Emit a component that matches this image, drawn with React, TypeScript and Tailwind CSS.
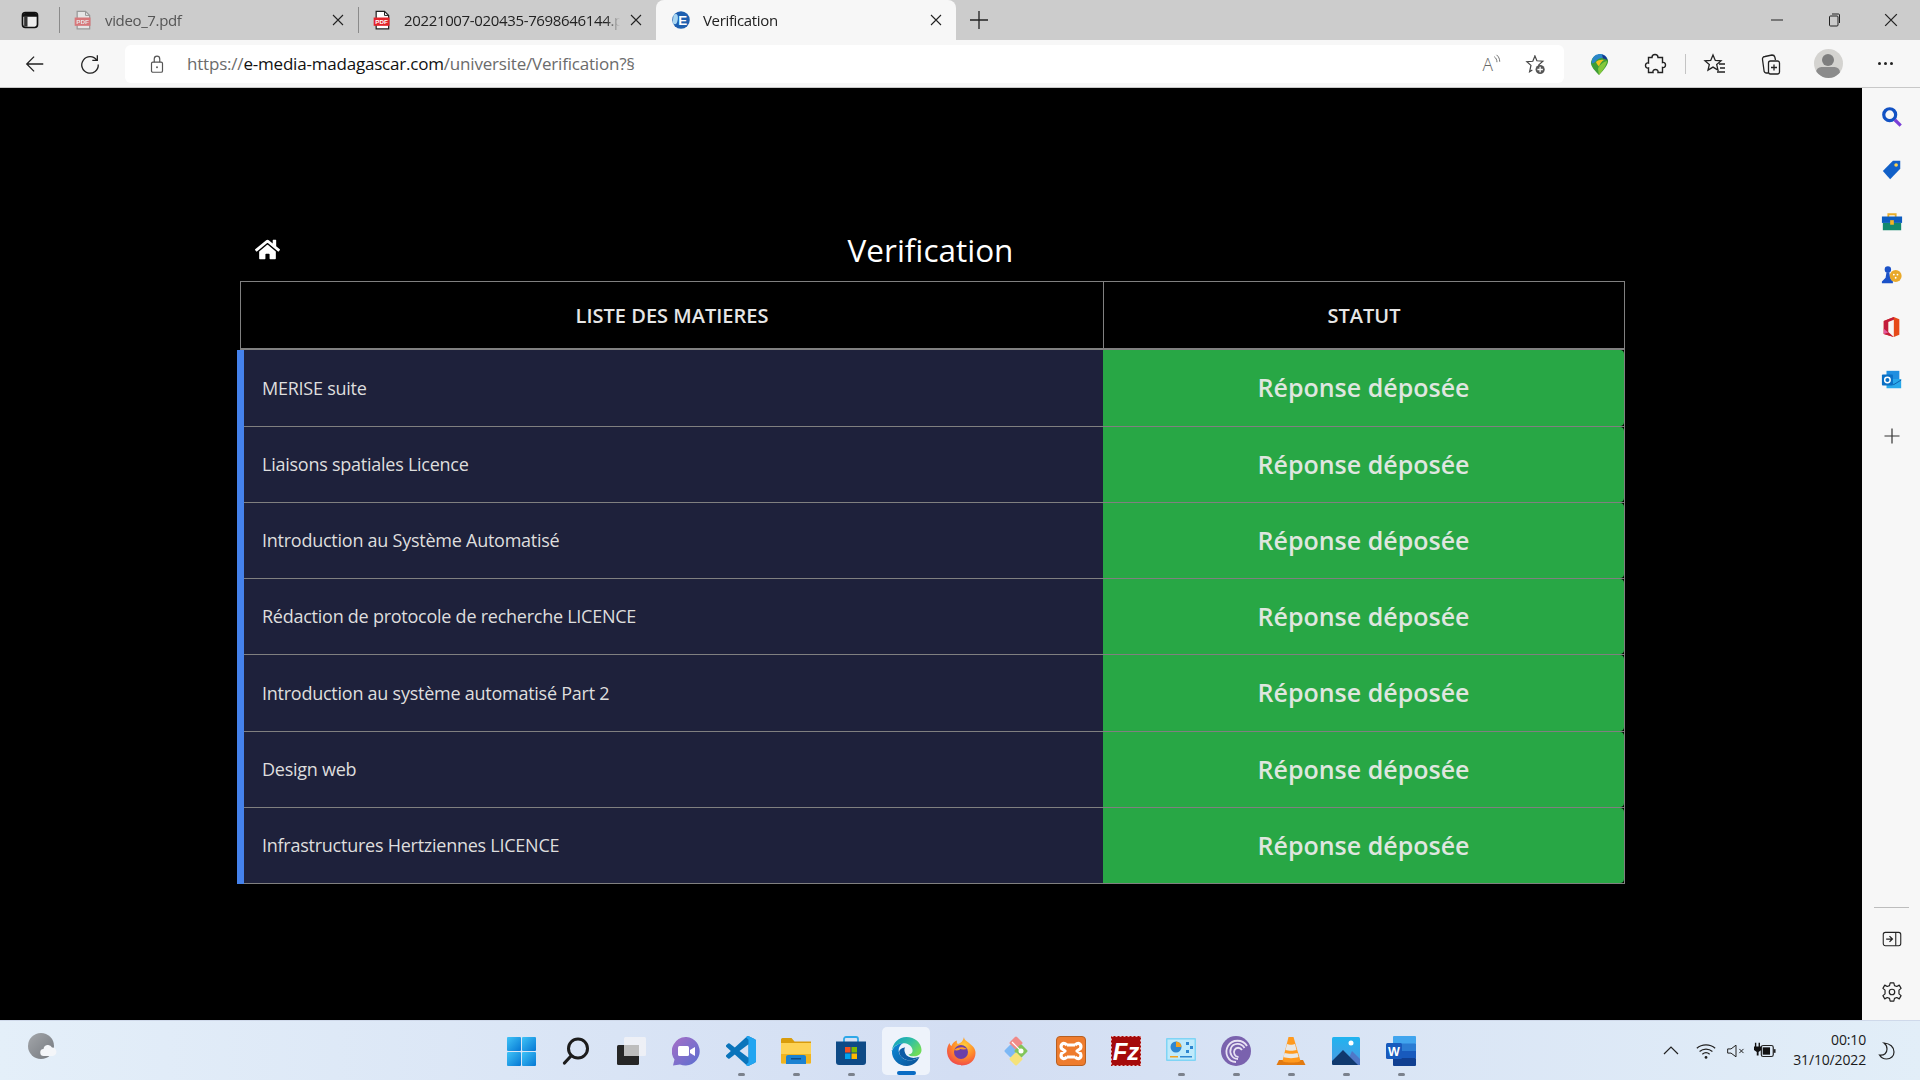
import React from "react";
import { FaHome } from "react-icons/fa";

const matieres = [
  "MERISE suite",
  "Liaisons spatiales Licence",
  "Introduction au Système Automatisé",
  "Rédaction de protocole de recherche LICENCE",
  "Introduction au système automatisé Part 2",
  "Design web",
  "Infrastructures Hertziennes LICENCE",
];

const rowH = ["h-[77px]", "h-[76px]", "h-[76px]", "h-[76px]", "h-[77px]", "h-[76px]", "h-[76px]"];

const S = ({ size = 20, vb = 24, children, className = "" }: { size?: number; vb?: number; children: React.ReactNode; className?: string }) => (
  <svg width={size} height={size} viewBox={`0 0 ${vb} ${vb}`} fill="none" className={`block shrink-0 ${className}`}>
    {children}
  </svg>
);

const Pdf = ({ faded }: { faded?: boolean }) => (
  <S size={20} className={faded ? "opacity-50" : ""}>
    <path d="M5 1.500h10l5 5v16H5z" fill="#fff" stroke={faded ? "#666" : "#222"} strokeWidth="1.500" />
    <path d="M15 1.500v5h5" stroke={faded ? "#666" : "#222"} strokeWidth="1.200" />
    <rect x="2" y="9" width="19" height="10" fill="#e3242b" />
    <text x="11.500" y="17" fontSize="7.500" fontWeight="700" textAnchor="middle" fill="#fff" fontFamily="Liberation Sans, sans-serif">PDF</text>
  </S>
);

const Favicon = () => (
  <S size={20}>
    <circle cx="12" cy="12" r="10.500" fill="#1e5fb0" />
    <path d="M3 6c4-3 6 0 5 6s-3 6-6 4" fill="#a8d6f2" />
    <text x="14" y="18" fontSize="16" fontWeight="700" textAnchor="middle" fill="#fff" fontFamily="Liberation Sans, sans-serif">E</text>
  </S>
);

const XIcon = ({ size = 12 }: { size?: number }) => (
  <S size={size} vb={12}>
    <path d="M1 1l10 10M11 1L1 11" stroke="#222" strokeWidth="1.100" />
  </S>
);

const Tab = ({ width, icon, text, textClass, active, sep }: { width: string; icon: React.ReactNode; text: string; textClass: string; active?: boolean; sep?: boolean }) => (
  <div className={`${width} h-10 flex items-center shrink-0 ${active ? "bg-[#f7f7f7] rounded-t-lg pl-[15px] pr-[14px]" : "pl-[13px] pr-[14px]"} ${sep ? "border-l border-[#8a8a8a] [border-image:linear-gradient(transparent_20%,#8a8a8a_20%,#8a8a8a_80%,transparent_80%)_1]" : ""}`}>
    {icon}
    <span className={`ml-[12px] flex-1 min-w-0 whitespace-nowrap overflow-hidden text-[15px] tracking-[-0.35px] [mask-image:linear-gradient(to_left,transparent,black_14px)] ${textClass}`}>{text}</span>
    <span className="ml-[10px]"><XIcon /></span>
  </div>
);

const TabStrip = () => (
  <div className="h-10 bg-[#cccccc] flex items-center shrink-0 font-['Open_Sans',sans-serif]">
    <div className="w-[59px] h-10 flex items-center justify-center shrink-0">
      <S size={20}>
        <rect x="3" y="3" width="18" height="18" rx="3.500" stroke="#111" strokeWidth="2" fill="#eee" />
        <path d="M3.500 6.500a3 3 0 0 1 3-3h11a3 3 0 0 1 3 3V8h-17z" fill="#111" />
        <rect x="5" y="7" width="4" height="13" fill="#333" />
      </S>
    </div>
    <Tab width="w-[299px]" sep icon={<Pdf faded />} text="video_7.pdf" textClass="text-[#555]" />
    <Tab width="w-[298px]" sep icon={<Pdf />} text="20221007-020435-7698646144.pdf" textClass="text-[#222]" />
    <Tab width="w-[300px]" active icon={<Favicon />} text="Verification" textClass="text-[#222]" />
    <div className="ml-[13px]">
      <S size={20} vb={20}><path d="M10 1v18M1 10h18" stroke="#222" strokeWidth="1.300" /></S>
    </div>
    <div className="ml-auto flex items-center">
      <div className="w-[57px] flex justify-center"><S size={12} vb={12}><path d="M0 6h12" stroke="#222" /></S></div>
      <div className="w-[57px] flex justify-center">
        <S size={14} vb={14}>
          <rect x="2.500" y="3" width="8.500" height="10" rx="1" stroke="#222" />
          <path d="M5 1h6.500a1 1 0 0 1 1 1v8" stroke="#222" />
        </S>
      </div>
      <div className="w-[58px] flex justify-center"><XIcon size={14} /></div>
    </div>
  </div>
);

const Toolbar = () => (
  <div className="h-[48px] bg-[#f7f7f7] flex items-center shrink-0 border-b border-[#c8c8c8] font-['Open_Sans',sans-serif]">
    <div className="w-[69px] flex justify-center">
      <S size={22}><path d="M21 12H3M11 4l-8 8 8 8" stroke="#222" strokeWidth="1.400" /></S>
    </div>
    <div className="w-[42px] flex justify-center">
      <S size={22}><path d="M19.500 8A9 9 0 1 0 21 12.500M20 2.500V8h-5.500" stroke="#222" strokeWidth="1.400" /></S>
    </div>
    <div className="ml-[14px] w-[1439px] h-[38px] bg-white rounded-md flex items-center shrink-0">
      <div className="w-[62px] pl-[1px] flex justify-center shrink-0">
        <S size={22}>
          <rect x="6" y="10" width="12" height="11" rx="1.500" stroke="#555" strokeWidth="1.300" />
          <path d="M9 10V6.500a3 3 0 0 1 6 0V10" stroke="#555" strokeWidth="1.300" />
          <circle cx="12" cy="15.500" r="1" fill="#555" />
        </S>
      </div>
      <span className="text-[17px] tracking-[-0.2px] whitespace-nowrap text-[#6b6b6b]">
        https://<span className="text-[#111]">e-media-madagascar.com</span>/universite/Verification?§
      </span>
      <div className="ml-auto flex items-center pr-[17px] gap-[23px]">
        <S size={22}>
          <text x="8.500" y="20" fontSize="19" fontWeight="300" textAnchor="middle" fill="#666" fontFamily="Open Sans, sans-serif">A</text>
          <path d="M15.500 4c2 1.500 3 3.500 3 6M18 2c2.500 2 3.500 4.500 3.500 7.500" stroke="#666" strokeWidth="1" />
        </S>
        <S size={22}>
          <path d="M10.500 2.500l2.500 6 6.500.5-4.500 4 .5 3M8 18.500l-3 2 1.500-7-4.500-4 6.500-.5 2.500-6" stroke="#444" strokeWidth="1.300" />
          <circle cx="16.500" cy="18" r="5" fill="#555" />
          <path d="M16.500 15v6M13.500 18h6" stroke="#fff" strokeWidth="1.400" />
        </S>
      </div>
    </div>
    <div className="w-[70px] flex justify-center">
      <S size={24}>
        <path d="M4 10a9 9 0 0 1 17-2c1 4-5 11-9 15C9 20 3 14 4 10z" fill="#3f9d36" />
        <path d="M8 3.500C12 .5 19 2 20.500 7c-3-2-8-2-11 1.500-1.500 2-3 3-5 3 0-3 1-6.500 3.500-8z" fill="#2a86c8" />
        <path d="M15 2.500c3 1 5 3 5.500 6-1-1-2.500-2-4.500-2z" fill="#16358f" />
        <path d="M9 10c2-2 5-2.500 8-2-2 1-4 3.500-5 6.500-1-1-2.500-3-3-4.500z" fill="#f3c11f" />
        <path d="M11 17c1-4 5-7 9-8-.5 4-4.500 10-8 14z" fill="#84c83c" />
      </S>
    </div>
    <div className="w-[42px] flex justify-center">
      <S size={24}>
        <path d="M9 5.500c0-4 6-4 6 0h4.500v5c4-1 4 6 0 5v5h-4.500c1-4-6-4-5 0H5.500v-4.500c-4 1-4-6 0-5V5.500z" stroke="#222" strokeWidth="1.400" fill="none" />
      </S>
    </div>
    <div className="h-[20px] w-px bg-[#c4c4c4] ml-[9px]" />
    <div className="w-[58px] flex justify-center">
      <S size={24}>
        <path d="M10 3l2.300 5.500 5.700.4-4.300 3.700 1.300 5.500-5-3-5 3 1.300-5.500L2 8.900l5.700-.4z" stroke="#222" strokeWidth="1.300" />
        <path d="M16 12h6M17 16h5M14 20h8" stroke="#222" strokeWidth="1.300" />
      </S>
    </div>
    <div className="w-[54px] flex justify-center">
      <S size={24}>
        <path d="M9 21H7.500A2.500 2.500 0 0 1 5 18.500l-1.500-11A2.500 2.500 0 0 1 6 4.500l7-1.500c1.500 0 2.500.8 2.800 2l.7 3" stroke="#222" strokeWidth="1.300" />
        <rect x="9.500" y="9" width="11" height="13" rx="2" stroke="#222" strokeWidth="1.300" fill="#f7f7f7" />
        <path d="M15 12.500v6M12 15.500h6" stroke="#222" strokeWidth="1.300" />
      </S>
    </div>
    <div className="w-[60px] flex justify-center">
      <div className="w-[29px] h-[29px] rounded-full bg-[#d4d3d0] overflow-hidden flex flex-col items-center pt-[5px]">
        <div className="w-[12px] h-[14px] rounded-full bg-[#7e7e7e]" />
        <div className="w-[24px] h-[14px] rounded-full bg-[#8b8b8b] mt-[1px]" />
      </div>
    </div>
    <div className="w-[54px] flex justify-center gap-[3px]">
      <span className="w-[3px] h-[3px] rounded-full bg-[#222]" />
      <span className="w-[3px] h-[3px] rounded-full bg-[#222]" />
      <span className="w-[3px] h-[3px] rounded-full bg-[#222]" />
    </div>
  </div>
);

const Content = () => (
  <main className="flex-1 bg-black flex justify-center pt-[139px] pl-[3px] font-['Open_Sans',sans-serif] min-w-0">
    <div className="w-[1385px]">
      <div className="h-[54px] grid grid-cols-[1fr_auto_1fr] items-center pb-[9px]">
        <FaHome className="text-white w-[25px] h-[25px] ml-[15px]" />
        <h1 className="text-[31.500px] text-white mr-[4px] leading-none">Verification</h1>
        <span />
      </div>
      <div className="flex h-[69px] border border-[#808080] border-b-2">
        <div className="w-[862px] shrink-0 flex items-center justify-center pt-[1px] text-[20px] font-semibold text-[#e6e6e6]">LISTE DES MATIERES</div>
        <div className="flex-1 border-l border-[#808080] flex items-center justify-center pt-[1px] text-[20px] font-semibold text-[#e6e6e6]">STATUT</div>
      </div>
      {matieres.map((m, i) => (
        <div key={m} className={`${rowH[i]} flex -ml-[3px]`}>
          <div className="w-[866px] shrink-0 bg-[#1e213b] border-l-[7px] border-[#4582ec]">
            <div className="h-full w-full flex items-center pl-[18px] border-b border-[#808080] text-[18px] tracking-[-0.25px] text-[#dedede]">{m}</div>
          </div>
          <div className="flex-1 bg-black min-w-0 border-b border-r border-[#808080]">
            <div className="h-full bg-[#28a745] rounded-r-[4px] flex items-center justify-center text-[25px] font-semibold text-[#dfe6df]">Réponse déposée</div>
          </div>
        </div>
      ))}
    </div>
  </main>
);

const Sidebar = () => (
  <aside className="w-[58px] bg-[#f7f7f7] flex flex-col items-center shrink-0">
    <div className="flex flex-col items-center gap-[30.500px] pt-[18px] pl-[1px]">
      <S size={22}>
        <circle cx="9.500" cy="9.500" r="6.500" stroke="#1252c4" strokeWidth="3.500" />
        <path d="M15 15l6.500 6.500" stroke="#7a3fd6" strokeWidth="3.500" />
      </S>
      <S size={22}>
        <path d="M2 13L13 2h8v8.500L10 22z" fill="#1160c8" />
        <circle cx="16.500" cy="6.500" r="2" fill="#ffd24a" />
      </S>
      <S size={22}>
        <path d="M8 7V3.500h8V7" stroke="#e9ad2a" strokeWidth="2" />
        <rect x="1" y="6" width="22" height="7" fill="#0d5cc0" />
        <rect x="2" y="13" width="20" height="8" fill="#13896d" />
        <rect x="10" y="10" width="4" height="5" fill="#f5b423" />
      </S>
      <S size={22}>
        <circle cx="7.500" cy="6" r="3.500" fill="#1b52c8" />
        <path d="M6 9h3l1 6 3 4v2H1v-2l4-4z" fill="#1b52c8" />
        <circle cx="16" cy="13" r="6.500" fill="#e9a92a" />
        <circle cx="14" cy="11.500" r="1" fill="#fff" /><circle cx="18" cy="11.500" r="1" fill="#fff" /><circle cx="16" cy="15" r="1" fill="#fff" />
      </S>
      <S size={22}>
        <path d="M14 1l6 2.500v17L14 23 3 19.500V5.500z" fill="#e64a19" />
        <path d="M3 5.500L14 1v3L8 6.500v11l6 5.500L3 19.500z" fill="#c31c3b" />
        <path d="M8 6.500l6-2.500v19l-6-5.500z" fill="#f7f7f7" />
        <path d="M3 14v5.500L8 18z" fill="#e45a9f" />
      </S>
      <S size={22}>
        <rect x="6" y="2" width="14" height="10" fill="#1f8ee0" />
        <path d="M6 11h16v10H6z" fill="#28a8ea" />
        <path d="M6 12l8 5 8-5" stroke="#0a5aa8" strokeWidth="1" />
        <rect x="1" y="6" width="12" height="12" rx="1" fill="#0a6fc4" />
        <circle cx="7" cy="12" r="3" stroke="#fff" strokeWidth="1.600" />
      </S>
      <S size={16} vb={16} className="mt-[7px]"><path d="M8 .5v15M.5 8h15" stroke="#333" strokeWidth="1.200" /></S>
    </div>
    <div className="mt-auto w-full flex flex-col items-center pb-[17px] pl-[1px]">
      <div className="w-[35px] h-px bg-[#bdbdbd] mb-0" />
      <div className="mt-[21px]">
        <S size={20}>
          <rect x="1.500" y="4" width="21" height="16" rx="2.500" stroke="#222" strokeWidth="1.300" />
          <path d="M16.500 4v16" stroke="#222" strokeWidth="1.300" />
          <path d="M5 12h7M9 8.500l3.500 3.500L9 15.500" stroke="#222" strokeWidth="1.500" />
        </S>
      </div>
      <div className="mt-[32px]">
        <S size={22}>
          <path d="M10 2h4l.7 3 2.500 1 2.700-1.500 2 3.500L19.600 10v4l2.300 2-2 3.500-2.700-1.500-2.500 1L14 22h-4l-.7-3-2.500-1L4.100 19.500l-2-3.500L4.400 14v-4L2.100 8l2-3.500L6.800 6l2.500-1z" stroke="#222" strokeWidth="1.300" strokeLinejoin="round" />
          <circle cx="12" cy="12" r="3" stroke="#222" strokeWidth="1.300" />
        </S>
      </div>
    </div>
  </aside>
);

const Start = () => (
  <S size={29} vb={29}>
    <defs>
      <linearGradient id="st" x1="0" y1="0" x2="1" y2="1"><stop offset="0" stopColor="#3fc3f7" /><stop offset="1" stopColor="#0678d4" /></linearGradient>
    </defs>
    <rect x="0" y="0" width="14" height="14" rx="1" fill="url(#st)" />
    <rect x="15" y="0" width="14" height="14" rx="1" fill="url(#st)" />
    <rect x="0" y="15" width="14" height="14" rx="1" fill="url(#st)" />
    <rect x="15" y="15" width="14" height="14" rx="1" fill="url(#st)" />
  </S>
);

const Search = () => (
  <S size={28} vb={28}>
    <circle cx="16" cy="11.500" r="9.500" stroke="#1c1c1c" strokeWidth="3" />
    <path d="M9 19l-6.500 7" stroke="#1c1c1c" strokeWidth="3.200" strokeLinecap="round" />
  </S>
);

const TaskView = () => (
  <S size={30} vb={30}>
    <rect x="1" y="9" width="22" height="20" rx="1.500" fill="#262626" />
    <rect x="8" y="1" width="22" height="19" rx="1.500" fill="#f2f3f6" fillOpacity="0.8" />
    <rect x="8" y="9" width="15" height="11" fill="#bdbdbd" />
  </S>
);

const Chat = () => (
  <S size={29} vb={29}>
    <defs>
      <linearGradient id="ch" x1="0" y1="0" x2="1" y2="1"><stop offset="0" stopColor="#a86fc6" /><stop offset="1" stopColor="#5a6fd0" /></linearGradient>
    </defs>
    <path d="M14.500 0A14.300 14.300 0 1 1 8 27.500L1 28.500l1.500-6A14.300 14.300 0 0 1 14.500 0z" fill="url(#ch)" />
    <rect x="6" y="9" width="11" height="10" rx="1.500" fill="#fff" />
    <path d="M18 13l5-3v9l-5-3z" fill="#fff" />
  </S>
);

const VSCode = () => (
  <S size={30}>
    <path d="M23.150 2.587L18.210.21a1.494 1.494 0 0 0-1.705.29l-9.460 8.630-4.120-3.128a.999.999 0 0 0-1.276.057L.327 7.261A1 1 0 0 0 .326 8.740L3.899 12 .326 15.260a1 1 0 0 0 .001 1.479L1.650 17.940a.999.999 0 0 0 1.276.057l4.120-3.128 9.460 8.630a1.492 1.492 0 0 0 1.704.29l4.942-2.377A1.500 1.500 0 0 0 24 20.060V3.939a1.500 1.500 0 0 0-.850-1.352zm-5.146 14.861L10.826 12l7.178-5.448v10.896z" fill="#0a74bb" />
    <path d="M23.150 2.587L18.210.21a1.494 1.494 0 0 0-1.705.29L16 1 18 3v18l-2 2 .5.500a1.492 1.492 0 0 0 1.704.29l4.942-2.377A1.500 1.500 0 0 0 24 20.060V3.939a1.500 1.500 0 0 0-.850-1.352z" fill="#22a5f1" />
  </S>
);

const Files = () => (
  <S size={30} vb={30}>
    <path d="M0 3.500A1.500 1.500 0 0 1 1.500 2h9l3 3.500H30V10H0z" fill="#d99c0c" />
    <path d="M0 7h30v19.500a1 1 0 0 1-1 1H1a1 1 0 0 1-1-1z" fill="#fdd255" />
    <path d="M0 18h30v8.500a1 1 0 0 1-1 1H1a1 1 0 0 1-1-1z" fill="#f0b420" />
    <path d="M5 28v-7a2 2 0 0 1 2-2h16a2 2 0 0 1 2 2v7z" fill="#1b82d2" />
    <rect x="10" y="22" width="10" height="1.500" fill="#0c4c8a" />
  </S>
);

const Store = () => (
  <S size={30} vb={30}>
    <path d="M8 6V3a2 2 0 0 1 2-2h10a2 2 0 0 1 2 2v3" stroke="#2ea8e8" strokeWidth="1.800" />
    <path d="M0 5.500h30V26a3 3 0 0 1-3 3H3a3 3 0 0 1-3-3z" fill="#0e4a86" />
    <rect x="9" y="11" width="5.500" height="5.500" fill="#f25022" />
    <rect x="15.500" y="11" width="5.500" height="5.500" fill="#7fba00" />
    <rect x="9" y="17.500" width="5.500" height="5.500" fill="#00a4ef" />
    <rect x="15.500" y="17.500" width="5.500" height="5.500" fill="#ffb900" />
  </S>
);

const Edge = () => (
  <S size={31} vb={32}>
    <defs>
      <linearGradient id="eg" x1="0" y1="0" x2="1" y2="0.6"><stop offset="0" stopColor="#0c9bc8" /><stop offset="0.6" stopColor="#35c1a0" /><stop offset="1" stopColor="#6fdc5a" /></linearGradient>
      <linearGradient id="eb" x1="0" y1="0" x2="1" y2="1"><stop offset="0" stopColor="#0d8ad8" /><stop offset="1" stopColor="#0a4f94" /></linearGradient>
    </defs>
    <path d="M1 15.500C1.500 7 8 1 16 1c8.500 0 15.500 6 15.500 13.500 0 4.500-4 6.500-8 6.500-2.500 0-5-.7-5.500-2 3 0 5-2 4-5.500-1-4-5.500-6-9-6-5.500 0-10.500 3-12.500 8z" fill="url(#eg)" />
    <path d="M1 15.500C3 10 8 7.500 12.500 7.500c-3 1.500-5 4.500-4.500 8.500.8 6 7 10 13.500 9 3-.4 6-1.500 8-3.500C27 27.500 22 31 16.500 31 7.500 31 .5 24 1 15.500z" fill="url(#eb)" />
    <path d="M8.500 17c.8 5 6 8.500 12.500 8 3-.3 6-1.500 8.500-3.500-3 1-6.500 1.500-9 .8-4-1-6-3.500-6.500-6.500-.3-1.500-.2-3 .6-4.300C11 12.500 8 14 8.500 17z" fill="#0b5aa6" />
  </S>
);

const Firefox = () => (
  <S size={30} vb={30}>
    <defs>
      <radialGradient id="ff" cx="0.6" cy="0.3" r="0.8"><stop offset="0" stopColor="#ffcf3b" /><stop offset="0.5" stopColor="#ff8a2a" /><stop offset="1" stopColor="#ec3a52" /></radialGradient>
    </defs>
    <path d="M15 29C6 29 1 22 1 15c0-3 1-6 2.500-8 .3 1.500 1 2.500 2 3 1-3 3-4.500 5.500-5.500-.5 2 0 3 1 3.500 3-1 5-3 6-7 0 3 3 4 5 6 3 2.500 6.500 5 6.500 10 0 8-6.500 12.500-14.500 12.500z" fill="url(#ff)" />
    <circle cx="15" cy="16" r="7" fill="#6c3fa8" />
    <path d="M8 14c3-3 9-4 13-1-2 .5-5 .5-7 0 0 1-3 2-6 1z" fill="#ff9a2e" />
  </S>
);

const Kraken = () => (
  <S size={32} vb={32}>
    <rect x="6" y="11" width="10" height="10" rx="1.500" transform="rotate(45 11 16)" fill="#7cb8f5" />
    <rect x="11" y="3" width="10" height="10" rx="1.500" transform="rotate(45 16 8)" fill="#f08a88" />
    <rect x="16" y="11" width="10" height="10" rx="1.500" transform="rotate(45 21 16)" fill="#82c45a" />
    <rect x="11" y="19" width="10" height="10" rx="1.500" transform="rotate(45 16 24)" fill="#f5e27a" />
    <circle cx="21" cy="16" r="2.500" fill="#fff" />
    <path d="M12 7l8 8" stroke="#fff" strokeWidth="1.200" />
  </S>
);

const Xampp = () => (
  <S size={30} vb={30}>
    <rect x="0.500" y="0.500" width="29" height="29" rx="3.500" fill="#ee7c2e" stroke="#b85f20" />
    <path d="M11 9C7 5.500 4 8.500 5.500 12.500L9 15l-3.500 2.500C4 21.500 7 24.500 11 21M19 9c4-3.500 7-.5 5.500 3.500L21 15l3.500 2.500C26 21.500 23 24.500 19 21M11 9h8M11 21h8" stroke="#fff" strokeWidth="3.200" strokeLinejoin="round" />
  </S>
);

const Filezilla = () => (
  <S size={30} vb={30}>
    <rect x="0" y="0" width="30" height="30" fill="#a50a0a" />
    <rect x="0.500" y="0.500" width="29" height="29" fill="none" stroke="#e8b0b0" strokeWidth="1" strokeDasharray="2 2" />
    <text x="15" y="24" fontSize="24" fontWeight="700" fontStyle="italic" textAnchor="middle" fill="#fff" fontFamily="Liberation Sans, sans-serif">Fz</text>
  </S>
);

const Panel = () => (
  <S size={30} vb={30}>
    <rect x="0" y="2" width="30" height="23" rx="1" fill="#7fd4f5" />
    <rect x="1.500" y="3.500" width="27" height="20" fill="#bfeafb" />
    <circle cx="10" cy="11" r="5.500" fill="#2e86d0" />
    <path d="M10 11V5.500a5.500 5.500 0 0 1 5.500 5.500z" fill="#f2a11f" />
    <rect x="20" y="6" width="3" height="3" fill="#2e86d0" /><rect x="24" y="10" width="3" height="3" fill="#2e86d0" /><rect x="20" y="14" width="3" height="3" fill="#2e86d0" />
    <rect x="4" y="20" width="8" height="1.500" fill="#f2a11f" /><rect x="14" y="20" width="12" height="1.500" fill="#2e86d0" />
  </S>
);

const Torrent = () => (
  <S size={30} vb={30}>
    <circle cx="15" cy="15" r="15" fill="#7a62ae" />
    <path d="M26 10C22 3 11 3 7 10s0 16 8 16" stroke="#e8e2f4" strokeWidth="1.800" />
    <path d="M23.500 12C20 6 12 7 10 12s1 11 7 11" stroke="#e8e2f4" strokeWidth="1.800" />
    <path d="M21 14c-2-3-6-3-7.500 0s.5 7 4 7" stroke="#e8e2f4" strokeWidth="1.800" />
  </S>
);

const Vlc = () => (
  <S size={30} vb={30}>
    <path d="M3 24h24l2.500 5H.5z" fill="#e27a10" />
    <path d="M12.500 1h5l7 24c-2 2-16 2-18 0z" fill="#ff9a1f" />
    <path d="M11 8c2 1 6 1 8 0l1.500 6c-3 1-8 1-11 0zM8.500 17c3 1 10 1 13 0l1 4c-3 1.500-12 1.500-15 0z" fill="#e8e8e8" />
  </S>
);

const Photos = () => (
  <S size={29} vb={29}>
    <defs><linearGradient id="ph" x1="0" y1="0" x2="0" y2="1"><stop offset="0" stopColor="#20b4f0" /><stop offset="1" stopColor="#4d98e0" /></linearGradient></defs>
    <rect width="28" height="28" rx="1.500" fill="url(#ph)" />
    <circle cx="19" cy="6" r="2.500" fill="#fff" />
    <path d="M14 28l6-14 8 8v6z" fill="#4f78c8" />
    <path d="M0 24l11-11 15 15H1.500A1.500 1.500 0 0 1 0 26.500z" fill="#10396e" />
  </S>
);

const Word = () => (
  <S size={30} vb={30}>
    <rect x="7" y="0" width="23" height="8" rx="1" fill="#41a5ee" />
    <rect x="7" y="7.500" width="23" height="7.500" fill="#2b7cd3" />
    <rect x="7" y="15" width="23" height="7.500" fill="#185abd" />
    <rect x="7" y="22" width="23" height="8" rx="1" fill="#103f91" />
    <rect x="0" y="7" width="16" height="16" rx="1.500" fill="#185abd" />
    <text x="8" y="20" fontSize="12.500" fontWeight="700" textAnchor="middle" fill="#fff" fontFamily="Liberation Sans, sans-serif">W</text>
  </S>
);

const apps: { el: React.ReactNode; dot?: boolean; active?: boolean }[] = [
  { el: <Start /> },
  { el: <Search /> },
  { el: <TaskView /> },
  { el: <Chat /> },
  { el: <VSCode />, dot: true },
  { el: <Files />, dot: true },
  { el: <Store />, dot: true },
  { el: <Edge />, active: true },
  { el: <Firefox /> },
  { el: <Kraken /> },
  { el: <Xampp /> },
  { el: <Filezilla /> },
  { el: <Panel />, dot: true },
  { el: <Torrent />, dot: true },
  { el: <Vlc />, dot: true },
  { el: <Photos />, dot: true },
  { el: <Word />, dot: true },
];

const Taskbar = () => (
  <footer className="h-[60px] shrink-0 border-t border-[#cfd9ea] bg-gradient-to-r from-[#e4eff9] via-[#d3def3] to-[#e2eef8] grid grid-cols-[1fr_auto_1fr] font-['Open_Sans',sans-serif]">
    <div className="flex items-center pl-[28px] pb-[10px]">
      <div className="w-[26px] h-[26px] rounded-full bg-gradient-to-br from-[#a4a7ab] to-[#74787e] flex items-end justify-end">
        <S size={17} vb={17} className="translate-x-[3px] -translate-y-[1px]">
          <path d="M4 15a3.500 3.500 0 0 1-.5-7A4.500 4.500 0 0 1 12 6.500a4.300 4.300 0 0 1 1 8.500z" fill="#f4f6f9" />
        </S>
      </div>
    </div>
    <div className="flex pl-[2px]">
      {apps.map((a, i) => (
        <div key={i} className="w-[55px] h-[60px] flex items-start justify-center pt-[6px]">
          <div className={`w-[48px] h-[48px] rounded-[5px] flex flex-col items-center relative ${a.active ? "bg-[#eef3fb]" : ""}`}>
            <div className="h-[48px] flex items-center justify-center">{a.el}</div>
            {a.active && <span className="absolute bottom-0 w-[19px] h-[4px] rounded-full bg-[#0a6cc4]" />}
            {a.dot && <span className="absolute bottom-[-1px] w-[7px] h-[3px] rounded-full bg-[#7b818c]" />}
          </div>
        </div>
      ))}
    </div>
    <div className="flex items-center justify-end text-[#1a1a1a]">
      <S size={18} vb={18}><path d="M2 12l7-7 7 7" stroke="#222" strokeWidth="1.200" /></S>
      <div className="ml-[15px]">
        <S size={22}>
          <path d="M2 9c5.500-5 14.500-5 20 0M5 12.500c4-3.500 10-3.500 14 0M8 15.500c2.300-2 5.700-2 8 0" stroke="#222" strokeWidth="1.300" />
          <circle cx="12" cy="19" r="1.500" fill="#222" />
        </S>
      </div>
      <div className="ml-[9px]">
        <S size={20}>
          <path d="M2 9.500h4l6-4.500v14l-6-4.500H2z" stroke="#222" strokeWidth="1.200" />
          <path d="M16 9.500l5 5M21 9.500l-5 5" stroke="#222" strokeWidth="1.200" />
        </S>
      </div>
      <div className="ml-[8px]">
        <S size={22}>
          <path d="M1 3h1.500v4H1zM5 3h1.500v4H5zM0 7h8v4l-3 2v4H3v-4l-3-2z" fill="#111" />
          <rect x="8" y="6" width="13" height="12" rx="2" stroke="#222" strokeWidth="1.300" />
          <rect x="9.500" y="8" width="8" height="8" fill="#111" />
          <rect x="21.500" y="10" width="2" height="4" fill="#222" />
        </S>
      </div>
      <div className="ml-[17px] text-right text-[14px] leading-[20px] tracking-[-0.15px] pb-[2px]">
        <div>00:10</div>
        <div>31/10/2022</div>
      </div>
      <div className="ml-[12px] mr-[24px]">
        <S size={18} vb={18}><path d="M6 1c6 .5 10 4 10 9 0 4-3 7-7.500 7C5.500 17 3 15.500 1.500 13c5 .5 7.500-2 7.500-6 0-2.500-1-4.500-3-6z" stroke="#222" strokeWidth="1.200" /></S>
      </div>
    </div>
  </footer>
);

export default function App() {
  return (
    <div className="w-[1920px] h-[1080px] flex flex-col overflow-hidden bg-black">
      <TabStrip />
      <Toolbar />
      <div className="flex-1 flex min-h-0">
        <Content />
        <Sidebar />
      </div>
      <Taskbar />
    </div>
  );
}
